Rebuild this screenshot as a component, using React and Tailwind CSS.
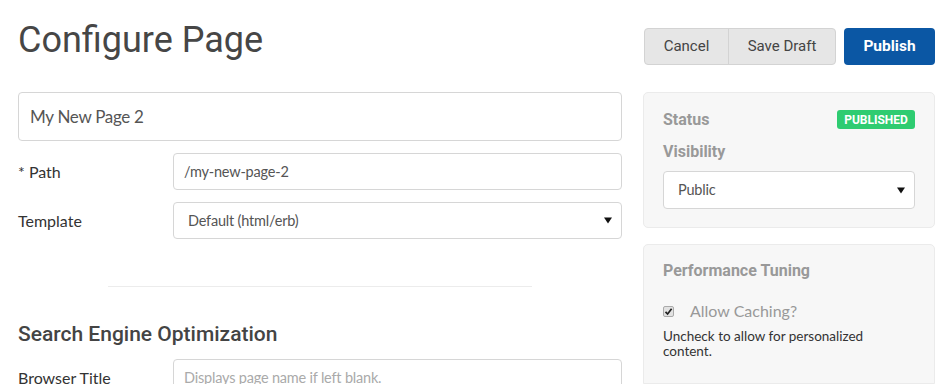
import React from "react";

const body = { fontFamily: "Lato, 'Open Sans', sans-serif" };
const rob = { fontFamily: "Roboto, 'Liberation Sans', sans-serif" };

function Caret() {
  return (
    <svg width="8" height="7" viewBox="0 0 8 7" className="shrink-0">
      <path d="M0 0.5 H8 L4 6.5 Z" fill="#111" />
    </svg>
  );
}

function Row({ label, children }) {
  return (
    <div className="flex items-center shrink-0">
      <div className="w-[155px] shrink-0 text-[16px] text-[#333]" style={body}>{label}</div>
      <div className="flex-1">{children}</div>
    </div>
  );
}

export default function App() {
  return (
    <div className="w-[942px] h-[384px] overflow-hidden bg-white flex pl-[18px] pr-[7px] gap-[21px]">
      {/* left column */}
      <div className="w-[604px] shrink-0 flex flex-col">
        <h1 className="shrink-0 mt-[20px] h-[40px] leading-[40px] text-[36px] text-[#464646]" style={rob}>Configure Page</h1>
        <div className="shrink-0 mt-[32px] h-[49px] border border-[#d6d6d6] rounded-[4px] flex items-center pl-[11px] text-[17px] tracking-[-0.3px] text-[#555]" style={body}>
          My New Page 2
        </div>
        <div className="shrink-0 mt-[12px] flex flex-col gap-[12px]">
          <Row label="* Path">
            <div className="h-[37px] border border-[#d6d6d6] rounded-[4px] flex items-center pl-[10px] text-[14.5px] tracking-[-0.2px] text-[#555]" style={body}>
              /my-new-page-2
            </div>
          </Row>
          <Row label="Template">
            <div className="h-[37px] border border-[#d6d6d6] rounded-[4px] flex items-center justify-between pl-[14px] pr-[9px] text-[14.5px] tracking-[-0.2px] text-[#555]" style={body}>
              <span>Default (html/erb)</span>
              <Caret />
            </div>
          </Row>
        </div>
        <div className="shrink-0 mt-[47px] mx-auto w-[424px] h-px bg-[#ececec]" />
        <h2 className="shrink-0 mt-[35px] text-[21px] font-medium leading-[24px] text-[#444]" style={rob}>Search Engine Optimization</h2>
        <div className="shrink-0 mt-[13px]">
          <Row label="Browser Title">
            <div className="h-[37px] border border-[#d6d6d6] rounded-[4px] flex items-center pl-[10px] text-[14.5px] tracking-[-0.2px] text-[#aaa]" style={body}>
              Displays page name if left blank.
            </div>
          </Row>
        </div>
      </div>

      {/* right column */}
      <div className="flex-1 flex flex-col pt-[28px]">
        <div className="shrink-0 flex justify-end gap-[8px] pl-[1px]">
          <div className="flex flex-1 h-[37px] border border-[#d3d3d3] rounded-[4px] bg-[#e6e6e6] text-[15px] text-[#444]" style={rob}>
            <div className="w-[84px] flex items-center justify-center border-r border-[#d3d3d3]">Cancel</div>
            <div className="flex-1 flex items-center justify-center">Save Draft</div>
          </div>
          <div className="w-[91px] h-[37px] rounded-[4px] bg-[#0b57a4] text-white text-[15.5px] font-bold flex items-center justify-center" style={rob}>
            Publish
          </div>
        </div>

        <div className="shrink-0 mt-[27px] h-[136px] bg-[#f7f7f7] border border-[#ebebeb] rounded-[5px] px-[19px] pt-[17px]">
          <div className="flex items-center justify-between h-[19px]">
            <span className="text-[16px] font-bold text-[#999]" style={rob}>Status</span>
            <span className="h-[19px] w-[78px] rounded-[3px] bg-[#2ecc71] text-white text-[12px] font-bold flex items-center justify-center" style={rob}>PUBLISHED</span>
          </div>
          <div className="mt-[13px] text-[16px] font-bold text-[#999] leading-[20px]" style={rob}>Visibility</div>
          <div className="mt-[9px] h-[38px] bg-white border border-[#d6d6d6] rounded-[4px] flex items-center justify-between pl-[14px] pr-[9px] text-[14.5px] tracking-[-0.2px] text-[#555]" style={body}>
            <span>Public</span>
            <Caret />
          </div>
        </div>

        <div className="mt-[16px] flex-1 bg-[#f7f7f7] border border-[#ebebeb] rounded-t-[5px] px-[19px] pt-[16px]">
          <div className="text-[16px] font-bold text-[#999] leading-[20px]" style={rob}>Performance Tuning</div>
          <div className="mt-[18px] flex items-center gap-[16px]">
            <div className="w-[11px] h-[11px] rounded-[2px] border border-[#aaa] bg-[#e2e2e2] flex items-center justify-center">
              <svg width="9" height="9" viewBox="0 0 9 9">
                <path d="M1.5 4.8 L3.6 7 L7.6 1.8" stroke="#222" strokeWidth="1.7" fill="none" />
              </svg>
            </div>
            <span className="text-[16px] text-[#999]" style={body}>Allow Caching?</span>
          </div>
          <div className="mt-[6px] text-[13.5px] leading-[15px] text-[#333] w-[230px]" style={body}>
            Uncheck to allow for personalized content.
          </div>
        </div>
      </div>
    </div>
  );
}
